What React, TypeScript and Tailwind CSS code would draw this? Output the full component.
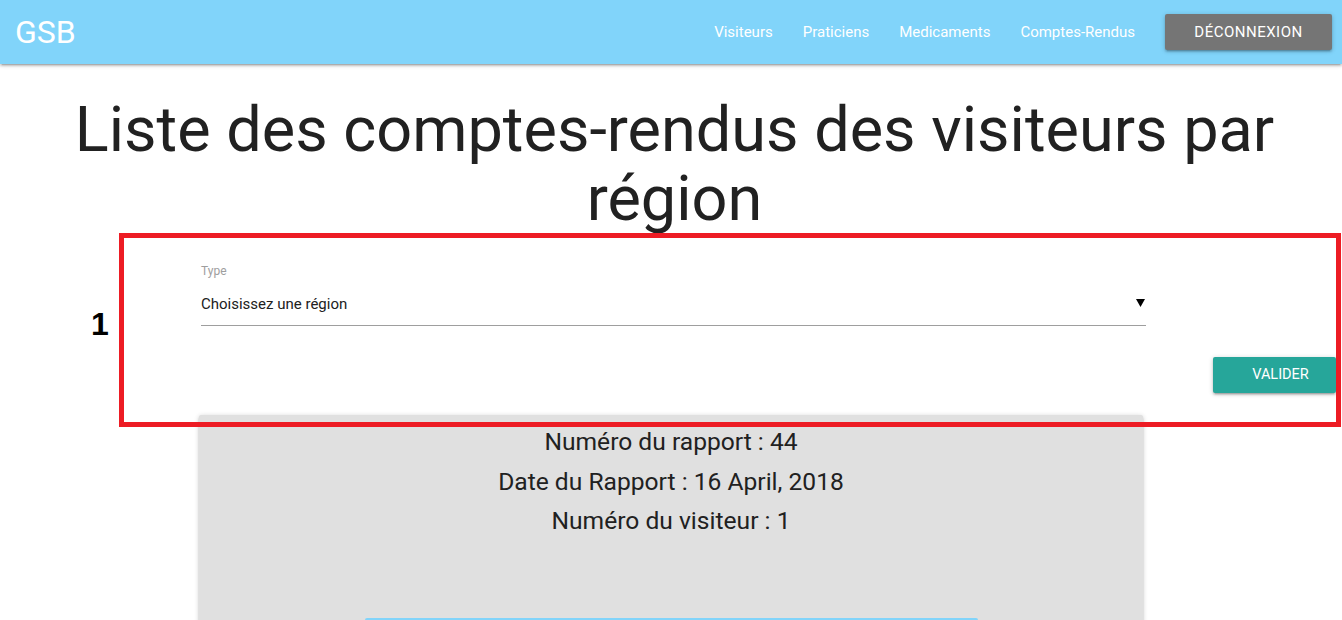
import React from "react";

export default function App() {
  const links = ["Visiteurs", "Praticiens", "Medicaments", "Comptes-Rendus"];
  return (
    <div className="relative min-h-screen bg-white font-['Roboto',sans-serif] text-[#212121] overflow-hidden">
      <nav className="h-16 bg-[#81d4fa] flex items-center justify-between pl-[15px] pr-[10px] shadow-[0_2px_2px_0_rgba(0,0,0,0.14),0_3px_1px_-2px_rgba(0,0,0,0.12),0_1px_5px_0_rgba(0,0,0,0.2)] relative z-10">
        <span className="text-[32px] text-white leading-none">GSB</span>
        <div className="flex items-center">
          {links.map((l) => (
            <a key={l} className="px-[15px] text-[15px] text-white">
              {l}
            </a>
          ))}
          <button className="ml-[15px] h-9 w-[167px] rounded-[2px] bg-[#757575] text-white text-[15px] tracking-[0.5px] uppercase shadow-[0_2px_2px_0_rgba(0,0,0,0.14),0_3px_1px_-2px_rgba(0,0,0,0.12),0_1px_5px_0_rgba(0,0,0,0.2)]">
            Déconnexion
          </button>
        </div>
      </nav>

      <h1 className="mt-[31px] pl-[7px] text-center text-[63px] leading-[69px] font-normal">
        Liste des comptes-rendus des visiteurs par région
      </h1>

      <div className="mx-auto w-[944px] pl-[2px]">
        <div className="mt-[31px] text-[12px] leading-[14px] text-[#9e9e9e]">Type</div>
        <div className="mt-[6px] h-[42px] w-[945px] flex items-center justify-between border-b border-[#9e9e9e] text-[15px]">
          <span>Choisissez une région</span>
          <svg width="9" height="8" viewBox="0 0 9 8" className="mr-[1px] mt-[-3px]">
            <polygon points="0,0 9,0 4.5,8" fill="#000" />
          </svg>
        </div>
      </div>
      <div className="flex justify-end pr-[6px] mt-[31px]">
        <button className="h-9 w-[123px] pl-[12px] rounded-[2px] bg-[#26a69a] text-white text-[14.5px] shadow-[0_2px_2px_0_rgba(0,0,0,0.14),0_3px_1px_-2px_rgba(0,0,0,0.12),0_1px_5px_0_rgba(0,0,0,0.2)]">
          VALIDER
        </button>
      </div>

      <div className="mx-auto mt-[22px] w-[944px] h-[260px] rounded-[2px] bg-[#e0e0e0] pt-[7px] flex flex-col items-center shadow-[0_2px_2px_0_rgba(0,0,0,0.14),0_3px_1px_-2px_rgba(0,0,0,0.12),0_1px_5px_0_rgba(0,0,0,0.2)]">
        <p className="text-[24.6px] leading-[39.5px]">Numéro du rapport : 44</p>
        <p className="text-[24.6px] leading-[39.5px]">Date du Rapport : 16 April, 2018</p>
        <p className="text-[24.6px] leading-[39.5px]">Numéro du visiteur : 1</p>
        <div className="mt-[77px] h-9 w-[613px] rounded-[2px] bg-[#81d4fa]" />
      </div>

      <div className="absolute left-[119px] top-[233px] w-[1222px] h-[194px] border-[5px] border-[#ed1c24] pointer-events-none" />
      <div className="absolute left-[91px] top-[306px] text-[32px] font-bold leading-[36px] text-black font-['Liberation_Sans',sans-serif]">
        1
      </div>
    </div>
  );
}
